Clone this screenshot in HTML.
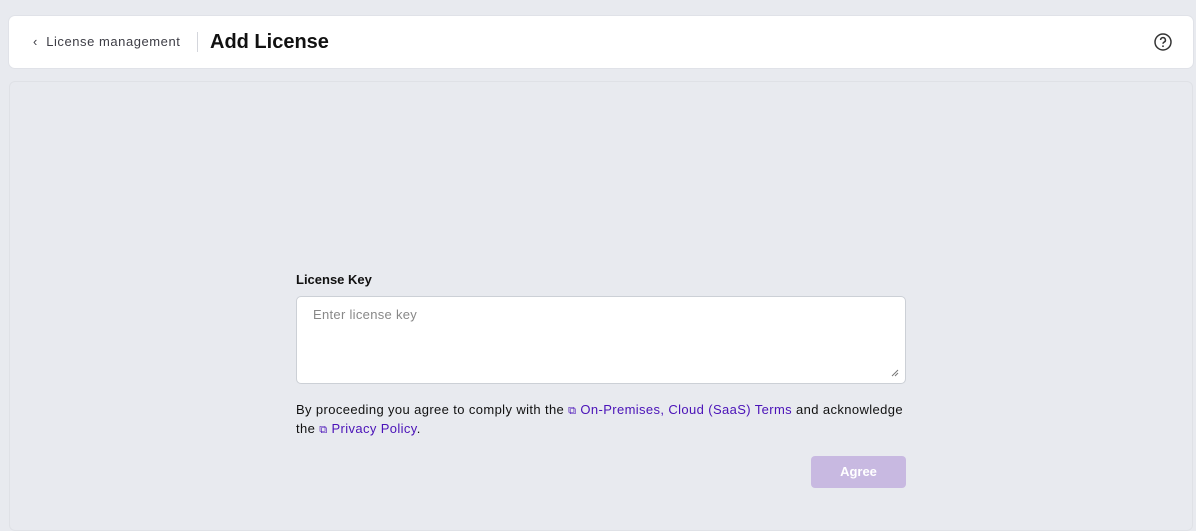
<!DOCTYPE html>
<html><head><meta charset="utf-8"><style>
*{box-sizing:border-box;margin:0;padding:0}
body{width:1196px;height:515px;background:#e8eaef;font-family:"Liberation Sans",sans-serif;position:relative;overflow:hidden}
.hdr{position:absolute;left:9px;top:16px;width:1184px;height:52px;background:#fff;border-radius:6px;box-shadow:0 0 0 1px #e0e2e8}
.back{position:absolute;left:24px;top:18px;font-size:13px;color:#3d3d45;letter-spacing:.55px}
.sep{position:absolute;left:188px;top:16px;width:1px;height:20px;background:#d4d6dc}
.title{position:absolute;left:201px;top:15px;font-size:20px;font-weight:bold;color:#111}
.help{position:absolute;left:1145px;top:17px}
.panel{position:absolute;left:9px;top:81px;width:1184px;height:450px;border:1px solid #dfe1e6;border-radius:6px;background:#e8eaef}
.lbl{position:absolute;left:296px;top:272px;font-size:13px;font-weight:bold;color:#111}
.ta{position:absolute;left:296px;top:296px;width:610px;height:88px;background:#fff;border:1px solid #ccd0d6;border-radius:5px}
.ta span{position:absolute;left:16px;top:10px;font-size:13px;color:#888;letter-spacing:.3px}
.ta svg{position:absolute;right:6px;bottom:6px}
.txt{position:absolute;left:296px;top:401px;width:612px;font-size:13px;line-height:18px;color:#111;letter-spacing:.38px}
.txt a{color:#4a12b8;text-decoration:none}
.txt small{font-size:11px}
.btn{position:absolute;left:811px;top:456px;width:95px;height:32px;background:#c8b9e1;border-radius:4px;color:#fff;font-weight:bold;font-size:13px;text-align:center;line-height:32px}
</style></head><body>
<div class="hdr">
<div class="back">&#8249;&nbsp; License management</div>
<div class="sep"></div>
<div class="title">Add License</div>
<svg class="help" width="18" height="18" viewBox="0 0 18 18"><circle cx="9" cy="9" r="8" fill="none" stroke="#333" stroke-width="1.5"/><path d="M6.6 7a2.4 2.4 0 1 1 3.4 2.2c-.7.4-1 .8-1 1.6" fill="none" stroke="#333" stroke-width="1.5"/><circle cx="9" cy="13.2" r=".9" fill="#333"/></svg>
</div>
<div class="panel"></div>
<div class="lbl">License Key</div>
<div class="ta"><span>Enter license key</span><svg width="8" height="8" viewBox="0 0 8 8"><path d="M1 7L7 1M4 7L7 4" stroke="#777" stroke-width="1"/></svg></div>
<div class="txt">By proceeding you agree to comply with the <a><small>&#10697;</small> On-Premises, Cloud (SaaS) Terms</a> and acknowledge the <a><small>&#10697;</small> Privacy Policy</a>.</div>
<div class="btn">Agree</div>
</body></html>
